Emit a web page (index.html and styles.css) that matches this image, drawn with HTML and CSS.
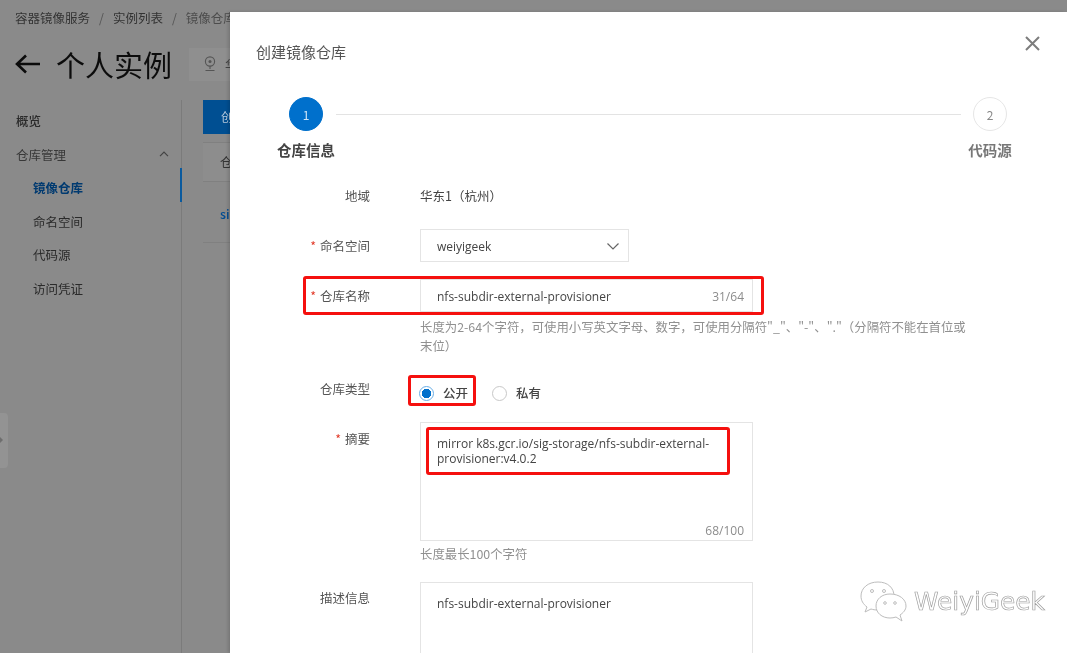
FILE: index.html
```html
<!DOCTYPE html>
<html lang="zh">
<head>
<meta charset="utf-8">
<title>创建镜像仓库</title>
<link rel="stylesheet" href="styles.css">
</head>
<body>
<div class="shot">
  <div class="console">
    <div class="crumbs"><span>容器镜像服务</span><i>/</i><span>实例列表</span><i>/</i><span class="faint">镜像仓库</span></div>
    <div class="head">
      <svg class="back" width="26" height="20" viewBox="0 0 26 20"><path d="M25 10H2M11 1.500 2 10l9 8.500" fill="none" stroke="#0b0b0b" stroke-width="2.600"/></svg>
      <h1>个人实例</h1>
      <div class="region">
        <svg width="12" height="18" viewBox="0 0 12 18"><circle cx="6" cy="6.500" r="4.600" fill="none" stroke="#555" stroke-width="1.100"/><circle cx="6" cy="6.500" r="1.500" fill="#555"/><path d="M6 11v3M1.500 15.500h9" stroke="#555" stroke-width="1.100"/></svg>
        <span>华东1</span>
      </div>
    </div>
    <div class="body">
      <nav class="side">
        <a class="item top">概览</a>
        <a class="item group">仓库管理<svg width="10" height="6" viewBox="0 0 10 6"><path d="M1 5.200 5 1.200l4 4" fill="none" stroke="#444" stroke-width="1.200"/></svg></a>
        <a class="item sub active">镜像仓库</a>
        <a class="item sub">命名空间</a>
        <a class="item sub">代码源</a>
        <a class="item sub">访问凭证</a>
        <div class="handle"></div>
      </nav>
      <main class="main">
        <div class="btn">创建镜像仓库</div>
        <div class="tabs">仓库名称</div>
        <div class="row">sig-storage</div>
      </main>
    </div>
    <aside class="drawer">
      <header class="dhead">
        <h2>创建镜像仓库</h2>
        <svg class="close" width="15" height="15" viewBox="0 0 15 15"><path d="M1 1l13 13M14 1 1 14" stroke="#7d7d7d" stroke-width="2"/></svg>
      </header>
      <div class="steps">
        <div class="step"><b class="dot on">1</b><em>仓库信息</em></div>
        <div class="line"></div>
        <div class="step off"><b class="dot">2</b><em>代码源</em></div>
      </div>
      <form class="form">
        <div class="field f-region"><label>地域</label><div class="val">华东1（杭州）</div></div>
        <div class="field f-ns"><label><s>*</s>命名空间</label>
          <div class="input select">weiyigeek<svg width="12" height="7" viewBox="0 0 12 7"><path d="M.5.500l5.500 5.500 5.500-5.500" fill="none" stroke="#666" stroke-width="1.200"/></svg></div>
        </div>
        <div class="field f-name"><label><s>*</s>仓库名称</label>
          <div class="stack">
            <div class="input name">nfs-subdir-external-provisioner<span class="count">31/64</span></div>
            <p class="hint">长度为2-64个字符，可使用小写英文字母、数字，可使用分隔符"_"、"-"、"."（分隔符不能在首位或末位）</p>
          </div>
        </div>
        <div class="field f-type"><label>仓库类型</label>
          <div class="radios">
            <span class="radio"><u class="rd on"></u>公开</span>
            <span class="radio"><u class="rd"></u>私有</span>
          </div>
        </div>
        <div class="field f-sum"><label><s>*</s>摘要</label>
          <div class="stack">
            <div class="area">
              <span class="atext">mirror k8s.gcr.io/sig-storage/nfs-subdir-external-provisioner:v4.0.2</span>
              <span class="count">68/100</span>
            </div>
            <p class="hint short">长度最长100个字符</p>
          </div>
        </div>
        <div class="field f-desc"><label>描述信息</label>
          <div class="area tall"><span class="atext">nfs-subdir-external-provisioner</span></div>
        </div>
      </form>
      <div class="mark m1"></div>
      <div class="mark m2"></div>
      <div class="mark m3"></div>
      <div class="water">
        <svg width="48" height="42" viewBox="0 0 48 42"><g fill="#fff" stroke="#bdbdbd" stroke-width="1"><path d="M18 2C8 2 1 8 1 16c0 4.500 2 8 6 11l-2 5 6-3c2 .600 4 1 7 1 9 0 16-6 16-14S28 2 18 2z"/><path d="M30 14c-8 0-14 5-14 12s6 12 14 12c2 0 4-.300 6-1l6 4-2-6c3-2 6-5 6-9 0-7-7-12-16-12z"/></g><g fill="none" stroke="#bdbdbd"><circle cx="12" cy="11" r="1.500"/><circle cx="24" cy="11" r="1.500"/><circle cx="25" cy="23" r="1.300"/><circle cx="35" cy="23" r="1.300"/></g></svg>
        <span>WeiyiGeek</span>
      </div>
    </aside>
  </div>
</div>
</body>
</html>
```
FILE: styles.css
```css
* { box-sizing: border-box; }
html, body { margin: 0; height: 100%; background: #fff; overflow: hidden; }
body { font-family: "Noto Sans CJK SC", "Noto Sans", sans-serif; color: #333; font-size: 12.500px; }
.shot { width: 1080px; height: 653px; padding-right: 13px; filter: blur(.35px); }
.console { position: relative; width: 100%; height: 100%; background: #8a8a8a; overflow: hidden; display: flex; flex-direction: column; }
.crumbs { display: flex; align-items: center; gap: 8px; padding: 7px 0 0 15px; height: 27px; color: #333; }
.crumbs i { font-style: normal; color: #555; margin: 0 1px; }
.crumbs .faint { color: #4c4c4c; white-space: nowrap; }
.head { display: flex; align-items: center; height: 50px; padding-left: 15px; margin-top: 12px; flex: none; }
.back { flex: none; }
.head h1 { margin: 0 0 0 15px; font-size: 29px; font-weight: 400; color: #0c0c0c; line-height: 1; white-space: nowrap; }
.region { display: flex; align-items: center; gap: 9px; width: 60px; height: 33px; margin-left: 17px; padding-left: 15px; background: #8f8f8f; color: #444; white-space: nowrap; overflow: hidden; flex: none; }
.region svg { flex: none; }
.body { flex: 1; display: flex; margin-top: 11px; }
.side { position: relative; width: 182px; padding-top: 4px; border-right: 1px solid #7b7b7b; flex: none; }
.item { position: relative; display: flex; align-items: center; height: 33.500px; color: #2a2a2a; padding-left: 16px; }
.item.group { color: #383838; justify-content: space-between; padding-right: 12px; }
.item.sub { padding-left: 33px; }
.item.top { font-weight: 500; }
.item.active { color: #003a70; font-weight: 700; }
.item.active::after { content: ""; position: absolute; right: -1px; top: -3px; width: 2px; height: 34px; background: #0a5a9e; }
.handle { position: absolute; left: 0; top: 313px; width: 8px; height: 55px; background: #939393; border-radius: 0 4px 4px 0; }
.handle::after { content: ""; position: absolute; left: 0; top: 24px; border: 3px solid transparent; border-left: 3px solid #6e6e6e; }
.main { flex: 1; padding-left: 21px; }
.btn { width: 60px; height: 34px; background: #004f92; color: #b7cadc; line-height: 34px; padding-left: 18px; overflow: hidden; white-space: nowrap; }
.tabs { height: 40px; margin-top: 8px; border-top: 1px solid #808080; border-bottom: 1px solid #808080; background: #8d8d8d; line-height: 38px; padding-left: 17px; color: #333; overflow: hidden; white-space: nowrap; width: 60px; }
.row { height: 61px; border-bottom: 1px solid #808080; width: 60px; padding: 22px 0 0 17px; color: #004b91; white-space: nowrap; overflow: hidden; font-weight: 500; }

.drawer { position: absolute; left: 230px; right: 0; top: 12px; bottom: 0; background: #fff; box-shadow: -2px 0 3px rgba(0,0,0,.14); }
.dhead { display: flex; align-items: center; justify-content: space-between; padding: 0 27px 0 26px; height: 78px; }
.dhead h2 { margin: 0; font-size: 15px; font-weight: 400; color: #555; }
.close { flex: none; align-self: flex-start; margin-top: 24px; }
.steps { display: flex; align-items: flex-start; padding: 7px 60px 0 59px; height: 97px; }
.step { position: relative; width: 34px; display: flex; flex-direction: column; align-items: center; flex: none; }
.step em { font-style: normal; font-weight: 700; font-size: 14.500px; color: #444; white-space: nowrap; margin-top: 9px; line-height: 20px; }
.step.off em { color: #777; }
.dot { display: flex; align-items: center; justify-content: center; width: 34px; height: 34px; border-radius: 50%; border: 1px solid #e6e6e6; font-weight: 400; color: #888; font-size: 12px; flex: none; }
.dot.on { background: #0070cc; border-color: #0070cc; color: #cfe4f6; }
.line { flex: 1; height: 1px; background: #e3e3e3; margin: 17px 12px 0 13px; }

.form { display: flex; flex-direction: column; }
.field { display: flex; align-items: flex-start; }
.field label { width: 140px; flex: none; text-align: right; color: #555; line-height: 18px; }
.field label s { text-decoration: none; color: #e23c2b; margin-right: 4px; }
.val { margin-left: 50px; line-height: 18px; color: #444; }
.input { margin-left: 50px; height: 33px; border: 1px solid #e4e4e4; display: flex; align-items: center; justify-content: space-between; padding: 1px 9px 0 16px; color: #444; font-family: "Open Sans", "Noto Sans CJK SC", sans-serif; font-size: 12px; }
.select { width: 209px; }
.name { width: 333px; margin-left: 0; padding-right: 8px; padding-top: 2px; }
.count { color: #8c8c8c; font-size: 12px; font-family: "Open Sans", sans-serif; }
.stack { margin-left: 50px; display: flex; flex-direction: column; }
.hint { margin: 0; width: 552px; color: #909090; font-size: 12.400px; line-height: 19px; padding-top: 6px; }
.f-region { height: 42px; }
.f-ns { height: 50px; }
.f-ns label, .f-name label { padding-top: 8px; }
.f-name { height: 101px; }
.f-type { height: 42px; }
.radios { display: flex; margin-left: 49px; gap: 24px; padding-top: 3px; }
.radio { display: flex; align-items: center; gap: 9px; color: #444; font-weight: 500; line-height: 20px; }
.rd { display: block; width: 15px; height: 15px; border-radius: 50%; border: 1px solid #c8c8c8; }
.rd.on { border-color: #6aaee6; background: radial-gradient(circle, #0070cc 0 4.500px, #fff 5px); }
.f-sum { height: 160px; }
.f-sum label { padding-top: 8px; }
.f-desc label { padding-top: 7px; }
.area { position: relative; width: 333px; height: 119px; border: 1px solid #e4e4e4; padding: 14px 16px; color: #444; font-family: "Open Sans", "Noto Sans CJK SC", sans-serif; font-size: 12px; line-height: 14.500px; }
.atext { display: block; width: 285px; }
.area .count { position: absolute; right: 8px; bottom: 0; line-height: 18px; }
.area.tall { margin-left: 50px; height: 90px; }
.short { padding-top: 4px; }
.mark { position: absolute; border: 3px solid #f5100e; border-radius: 3px; pointer-events: none; }
.m1 { left: 73px; top: 264px; width: 461px; height: 39px; }
.m2 { left: 178px; top: 363px; width: 68px; height: 31px; }
.m3 { left: 196px; top: 415px; width: 304px; height: 48px; }
.water { position: absolute; left: 630px; top: 568px; display: flex; align-items: center; gap: 6px; font-family: "DejaVu Sans", sans-serif; font-size: 24.800px; }
.water span { color: #fff; -webkit-text-stroke: 0.7px #9f9f9f; }
```
